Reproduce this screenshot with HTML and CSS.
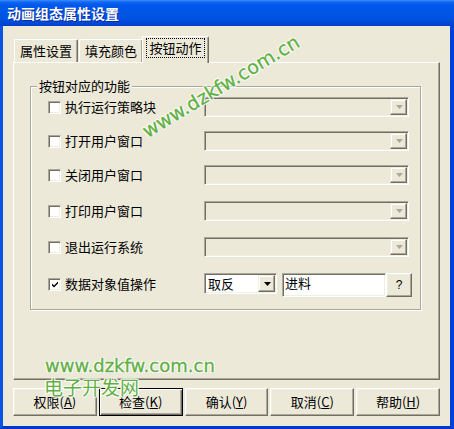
FILE: index.html
```html
<!DOCTYPE html>
<html lang="zh">
<head>
<meta charset="utf-8">
<link rel="stylesheet" href="styles.css">
</head>
<body>
<div class="window">
  <div class="titlebar"><span class="title">动画组态属性设置</span></div>
  <div class="frame">
    <div class="client">
      <div class="tabs">
        <div class="tab">属性设置</div>
        <div class="tab">填充颜色</div>
        <div class="tab active"><span class="focus">按钮动作</span></div>
      </div>
      <div class="panel">
        <div class="group">
          <span class="group-label">按钮对应的功能</span>
          <div class="row">
            <label class="check"><span class="box"></span><span>执行运行策略块</span></label>
            <div class="combo disabled"><span class="drop"><svg width="7" height="4" viewBox="0 0 7 4"><path d="M0 0h7L3.5 4z"/></svg></span></div>
          </div>
          <div class="row">
            <label class="check"><span class="box"></span><span>打开用户窗口</span></label>
            <div class="combo disabled"><span class="drop"><svg width="7" height="4" viewBox="0 0 7 4"><path d="M0 0h7L3.5 4z"/></svg></span></div>
          </div>
          <div class="row">
            <label class="check"><span class="box"></span><span>关闭用户窗口</span></label>
            <div class="combo disabled"><span class="drop"><svg width="7" height="4" viewBox="0 0 7 4"><path d="M0 0h7L3.5 4z"/></svg></span></div>
          </div>
          <div class="row">
            <label class="check"><span class="box"></span><span>打印用户窗口</span></label>
            <div class="combo disabled"><span class="drop"><svg width="7" height="4" viewBox="0 0 7 4"><path d="M0 0h7L3.5 4z"/></svg></span></div>
          </div>
          <div class="row">
            <label class="check"><span class="box"></span><span>退出运行系统</span></label>
            <div class="combo disabled"><span class="drop"><svg width="7" height="4" viewBox="0 0 7 4"><path d="M0 0h7L3.5 4z"/></svg></span></div>
          </div>
          <div class="row last">
            <label class="check"><span class="box"><svg width="9" height="9" viewBox="0 0 9 9"><path d="M1 3.5l2 2 4-4v2l-4 4-2-2z"/></svg></span><span>数据对象值操作</span></label>
            <div class="combo small"><span class="value">取反</span><span class="drop"><svg width="7" height="4" viewBox="0 0 7 4"><path d="M0 0h7L3.5 4z"/></svg></span></div>
            <div class="field">进料</div>
            <div class="qbtn">?</div>
          </div>
        </div>
      </div>
      <div class="buttons">
        <div class="btn">权限(<u>A</u>)</div>
        <div class="btn default">检查(<u>K</u>)</div>
        <div class="btn">确认(<u>Y</u>)</div>
        <div class="btn">取消(<u>C</u>)</div>
        <div class="btn">帮助(<u>H</u>)</div>
      </div>
    </div>
  </div>
  <div class="wm wm-rot">www.dzkfw.com.cn</div>
  <div class="wm wm-url">www.dzkfw.com.cn</div>
  <div class="wm wm-cn">电子开发网</div>
</div>
</body>
</html>
```

FILE: styles.css
```css
* { box-sizing: border-box; }
html, body { margin: 0; padding: 0; background: #ECE9D8; }
body { font-family: "Noto Sans CJK SC", "Noto Sans", sans-serif; font-size: 13px; color: #000; }

.window { position: relative; width: 454px; height: 429px; overflow: hidden; }

.titlebar {
  height: 26px;
  background: linear-gradient(to bottom, #3C8EFF 0px, #1468F2 2px, #0058EA 5px, #0055E5 14px, #0050DF 20px, #0046D2 24px, #003DC4 26px);
  display: flex; align-items: center; padding-left: 7px;
}
.title { color: #fff; font-weight: bold; font-size: 14px; line-height: 16px; text-shadow: 1px 1px 0 #0A2A9C; }

.frame {
  height: 403px;
  border-left: 3px solid #0B55E6;
  border-right: 4px solid #0040D8;
  border-bottom: 3px solid #0038CC;
  box-shadow: inset 1px 0 0 #2F74F0;
}
.client { height: 400px; background: #ECE9D8; padding: 10px 10px 0 10px; }

.tabs { height: 26px; display: flex; align-items: flex-end; padding-left: 1px; }
.tab {
  width: 64px; height: 23px; margin-right: 1px;
  display: flex; align-items: center; justify-content: center;
  background: #ECE9D8;
  border-top: 1px solid #fff; border-left: 1px solid #fff; border-right: 1px solid #716F64;
  border-radius: 2px 2px 0 0;
  box-shadow: inset -1px 0 0 #ACA899;
  line-height: 16px;
}
.tab.active {
  width: 67px; height: 27px; margin-left: -2px; margin-bottom: -1px;
  position: relative; z-index: 1; padding-bottom: 4px;
}
.focus { outline: 1px dotted #000; outline-offset: 1px; padding: 0 1px; line-height: 16px; }

.panel {
  width: 427px; height: 318px;
  border-top: 1px solid #fff; border-left: 1px solid #fff;
  border-right: 1px solid #716F64; border-bottom: 1px solid #716F64;
  box-shadow: inset -1px -1px 0 #ACA899;
  padding: 23px 18px 0 16px;
}

.group {
  position: relative;
  border: 1px solid #ACA899;
  box-shadow: inset 1px 1px 0 #fff, 1px 1px 0 #fff;
  padding: 10px 0 12px 17px;
}
.group-label {
  position: absolute; top: -9px; left: 6px;
  padding: 0 2px; background: #ECE9D8; line-height: 16px;
}

.row { display: flex; align-items: center; height: 20px; margin-bottom: 14px; }
.row:nth-child(n+4) { margin-bottom: 16px; }
.row.last { height: 24px; margin-bottom: 0; align-items: flex-start; }
.row.last .check { height: 22px; }

.check { width: 156px; display: flex; align-items: center; gap: 4px; line-height: 16px; }
.box {
  width: 13px; height: 13px; flex: none;
  background: #fff;
  border: 1px solid; border-color: #ACA899 #fff #fff #ACA899;
  box-shadow: inset 1px 1px 0 #716F64, inset -1px -1px 0 #F1EFE2;
  display: flex; align-items: center; justify-content: center;
}
.box svg { fill: #000; margin-top: 1px; margin-left: 1px; }

.combo {
  width: 205px; height: 20px;
  border: 1px solid; border-color: #ACA899 #fff #fff #ACA899;
  box-shadow: inset 1px 1px 0 #716F64, inset -1px -1px 0 #F1EFE2;
  padding: 1px 1px 1px 2px;
  display: flex; align-items: stretch; justify-content: flex-end;
  background: #ECE9D8;
}
.combo.small { width: 73px; height: 21px; background: #fff; justify-content: space-between; }
.value { line-height: 17px; padding-left: 1px; font-size: 13px; }
.drop {
  width: 17px;
  background: #ECE9D8;
  border: 1px solid; border-color: #F1EFE2 #716F64 #716F64 #F1EFE2;
  box-shadow: inset -1px -1px 0 #ACA899, inset 1px 1px 0 #fff;
  display: flex; align-items: center; justify-content: center;
}
.drop svg { fill: #000; margin-left: 1px; }
.combo.disabled .drop svg { fill: #ACA899; }

.field {
  width: 104px; height: 24px; margin-left: 5px;
  background: #fff;
  border: 1px solid; border-color: #ACA899 #fff #fff #ACA899;
  box-shadow: inset 1px 1px 0 #716F64, inset -1px -1px 0 #F1EFE2;
  padding: 1px 0 0 2px; line-height: 16px;
}
.qbtn {
  width: 26px; height: 24px;
  background: #ECE9D8;
  border: 1px solid; border-color: #fff #716F64 #716F64 #fff;
  box-shadow: inset -1px -1px 0 #ACA899, inset 1px 1px 0 #F1EFE2;
  display: flex; align-items: center; justify-content: center;
  font-family: "Liberation Sans", sans-serif; font-size: 12px;
}

.buttons { display: flex; gap: 2px; margin-top: 8px; }
.btn {
  width: 84px; height: 28px;
  background: #ECE9D8;
  border: 1px solid; border-color: #fff #716F64 #716F64 #fff;
  box-shadow: inset -1px -1px 0 #ACA899, inset 1px 1px 0 #F1EFE2;
  display: flex; align-items: center; justify-content: center;
  line-height: 16px;
}
.btn.default {
  border: 1px solid #000;
  box-shadow: inset 1px 1px 0 #fff, inset -1px -1px 0 #716F64, inset -2px -2px 0 #ACA899;
}
.btn u { text-underline-offset: 1px; }

.wm {
  position: absolute; white-space: nowrap;
  color: #62B042;
  font-family: "DejaVu Sans", sans-serif;
  -webkit-text-stroke: 0.3px #62B042;
  text-shadow: 0 0 2px #fff, 0 0 2px #fff, 1px 1px 0 rgba(255,255,255,.8), -1px -1px 0 rgba(255,255,255,.8), 1px -1px 0 rgba(255,255,255,.8), -1px 1px 0 rgba(255,255,255,.8);
}
.wm-url { left: 45px; top: 355px; font-size: 18px; line-height: 22px; }
.wm-cn { left: 44px; top: 376px; font-size: 19px; line-height: 22px; font-family: "Noto Sans CJK SC", sans-serif; -webkit-text-stroke: 0; }
.wm-rot { left: 131px; top: 75px; font-size: 19px; line-height: 22px; transform: rotate(-31deg); transform-origin: center; }
```
